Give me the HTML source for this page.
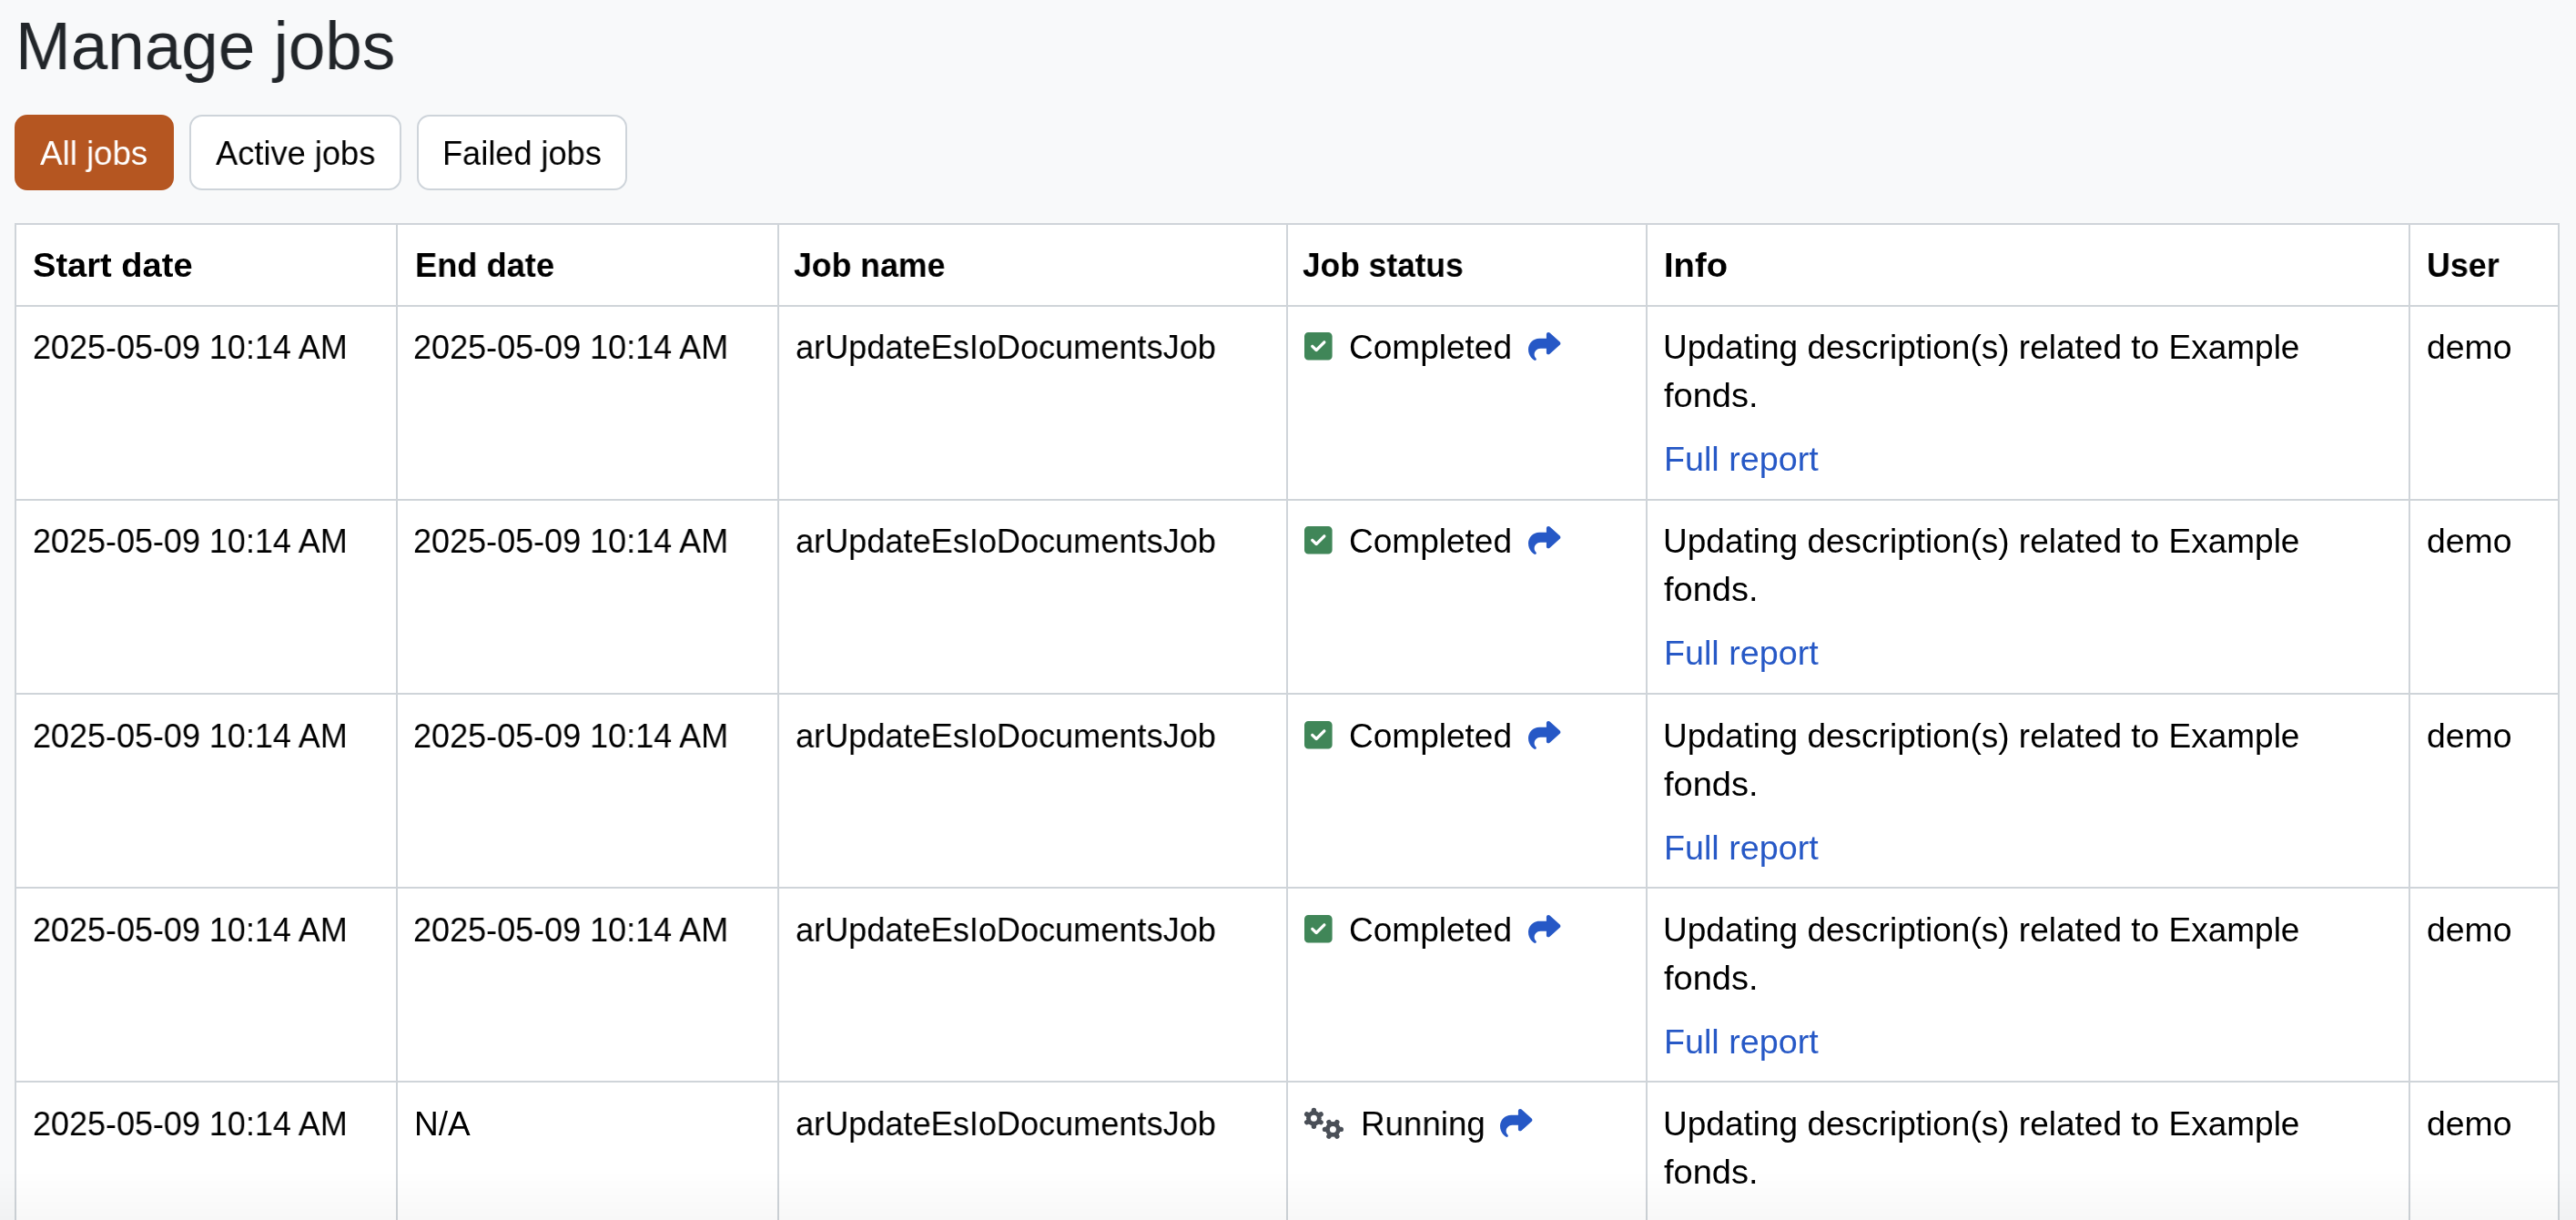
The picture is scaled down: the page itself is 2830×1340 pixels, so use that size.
<!DOCTYPE html>
<html><head><meta charset="utf-8"><title>Manage jobs</title>
<style>
html,body{margin:0;padding:0;}
body{width:2830px;height:1340px;overflow:hidden;background:#f8f9fa;position:relative;font-family:"Liberation Sans",sans-serif;}
.t{position:absolute;margin:0;padding:0;white-space:nowrap;line-height:0;transform-origin:0 0;will-change:transform;text-decoration:none;}
.btn{position:absolute;top:126px;height:83px;box-sizing:border-box;border:2px solid #ced4da;background:#fff;border-radius:14px;}
.btn.act{background:#b55621;border-color:#b55621;}
.tbl{position:absolute;background:#fff;}
.vl{position:absolute;width:2px;background:#cfd4d9;}
.hl{position:absolute;height:2px;background:#cfd4d9;}
.ic{position:absolute;overflow:visible;}
.fade{position:absolute;left:0;top:1285px;width:2830px;height:55px;background:linear-gradient(rgba(0,0,0,0),rgba(0,0,0,0.026));pointer-events:none;}
</style></head><body>
<h1 class="t" style="left:16.87px;top:51px;font-size:74px;font-weight:normal;color:#212529;transform:scaleX(0.9847);">Manage jobs</h1>
<div class="btn act" style="left:16px;width:174.5px"></div>
<a class="t" style="left:44.30px;top:169px;font-size:37px;font-weight:normal;color:#fff;transform:scaleX(0.9913);">All jobs</a>
<div class="btn" style="left:208px;width:232.5px"></div>
<a class="t" style="left:237.10px;top:169px;font-size:37px;font-weight:normal;color:#000;transform:scaleX(0.9797);">Active jobs</a>
<div class="btn" style="left:458px;width:230.5px"></div>
<a class="t" style="left:485.91px;top:169px;font-size:37px;font-weight:normal;color:#000;transform:scaleX(0.9769);">Failed jobs</a>
<div class="tbl" style="left:16px;top:245px;width:2796px;height:1105px"></div>
<div class="vl" style="left:16px;top:245px;height:1105px"></div>
<div class="vl" style="left:435px;top:245px;height:1105px"></div>
<div class="vl" style="left:854px;top:245px;height:1105px"></div>
<div class="vl" style="left:1413px;top:245px;height:1105px"></div>
<div class="vl" style="left:1808px;top:245px;height:1105px"></div>
<div class="vl" style="left:2646px;top:245px;height:1105px"></div>
<div class="vl" style="left:2810px;top:245px;height:1105px"></div>
<div class="hl" style="left:16px;top:245px;width:2796px"></div>
<div class="hl" style="left:16px;top:335px;width:2796px"></div>
<div class="hl" style="left:16px;top:548px;width:2796px"></div>
<div class="hl" style="left:16px;top:761px;width:2796px"></div>
<div class="hl" style="left:16px;top:974px;width:2796px"></div>
<div class="hl" style="left:16px;top:1187px;width:2796px"></div>
<b class="t" style="left:36.46px;top:291.5px;font-size:37px;font-weight:bold;color:#000;transform:scaleX(1.0288);">Start date</b>
<b class="t" style="left:456.34px;top:291.5px;font-size:37px;font-weight:bold;color:#000;transform:scaleX(0.9794);">End date</b>
<b class="t" style="left:872.17px;top:291.5px;font-size:37px;font-weight:bold;color:#000;transform:scaleX(0.9628);">Job name</b>
<b class="t" style="left:1430.87px;top:291.5px;font-size:37px;font-weight:bold;color:#000;transform:scaleX(0.9548);">Job status</b>
<b class="t" style="left:1828.02px;top:291.5px;font-size:37px;font-weight:bold;color:#000;transform:scaleX(1.0325);">Info</b>
<b class="t" style="left:2666.05px;top:291.5px;font-size:37px;font-weight:bold;color:#000;transform:scaleX(0.9679);">User</b>
<span class="t" style="left:35.80px;top:381.5px;font-size:37px;font-weight:normal;color:#000;transform:scaleX(0.9717);">2025-05-09 10:14 AM</span>
<span class="t" style="left:454.40px;top:381.5px;font-size:37px;font-weight:normal;color:#000;transform:scaleX(0.9728);">2025-05-09 10:14 AM</span>
<span class="t" style="left:874.26px;top:381.5px;font-size:37px;font-weight:normal;color:#000;transform:scaleX(0.9762);">arUpdateEsIoDocumentsJob</span>
<svg class="ic" style="left:1432.5px;top:365.3px" width="30.6" height="30.6" viewBox="0 32 448 448"><path fill="#408658" d="M64 32C28.7 32 0 60.7 0 96V416c0 35.3 28.7 64 64 64H384c35.3 0 64-28.7 64-64V96c0-35.3-28.7-64-64-64H64zM337 209L209 337c-9.4 9.4-24.6 9.4-33.9 0l-64-64c-9.4-9.4-9.4-24.6 0-33.9s24.6-9.4 33.9 0l47 47L303 175c9.4-9.4 24.6-9.4 33.9 0s9.4 24.6 0 33.9z"/></svg>
<span class="t" style="left:1482.05px;top:381.5px;font-size:37px;font-weight:normal;color:#000;transform:scaleX(1.0003);">Completed</span>
<svg class="ic" style="left:1678.9px;top:364.9px" width="35.4" height="31" viewBox="0 32 512 448"><path fill="#2658c6" d="M307 34.8c-11.5 5.1-19 16.6-19 29.2v64H176C78.8 128 0 206.8 0 304C0 417.3 81.5 467.9 100.2 478.1c2.5 1.4 5.3 1.9 8.1 1.9c10.9 0 19.7-8.9 19.7-19.7c0-7.5-4.3-14.4-9.8-19.5C108.8 431.9 96 414.4 96 384c0-53 43-96 96-96h96v64c0 12.6 7.4 24.1 19 29.2s25 3 34.4-5.4l160-144c6.7-6.1 10.6-14.7 10.6-23.8s-3.9-17.7-10.6-23.8l-160-144c-9.4-8.5-22.9-10.6-34.4-5.4z"/></svg>
<span class="t" style="left:1826.72px;top:381.5px;font-size:37px;font-weight:normal;color:#000;transform:scaleX(1.0003);">Updating description(s) related to Example</span>
<span class="t" style="left:1828.13px;top:434.5px;font-size:37px;font-weight:normal;color:#000;transform:scaleX(1.0273);">fonds.</span>
<a class="t" style="left:1828.28px;top:504.5px;font-size:37px;font-weight:normal;color:#2658c6;transform:scaleX(1.0186);">Full report</a>
<span class="t" style="left:2666.40px;top:381.5px;font-size:37px;font-weight:normal;color:#000;transform:scaleX(1.0107);">demo</span>
<span class="t" style="left:35.80px;top:594.5px;font-size:37px;font-weight:normal;color:#000;transform:scaleX(0.9717);">2025-05-09 10:14 AM</span>
<span class="t" style="left:454.40px;top:594.5px;font-size:37px;font-weight:normal;color:#000;transform:scaleX(0.9728);">2025-05-09 10:14 AM</span>
<span class="t" style="left:874.26px;top:594.5px;font-size:37px;font-weight:normal;color:#000;transform:scaleX(0.9762);">arUpdateEsIoDocumentsJob</span>
<svg class="ic" style="left:1432.5px;top:578.3px" width="30.6" height="30.6" viewBox="0 32 448 448"><path fill="#408658" d="M64 32C28.7 32 0 60.7 0 96V416c0 35.3 28.7 64 64 64H384c35.3 0 64-28.7 64-64V96c0-35.3-28.7-64-64-64H64zM337 209L209 337c-9.4 9.4-24.6 9.4-33.9 0l-64-64c-9.4-9.4-9.4-24.6 0-33.9s24.6-9.4 33.9 0l47 47L303 175c9.4-9.4 24.6-9.4 33.9 0s9.4 24.6 0 33.9z"/></svg>
<span class="t" style="left:1482.05px;top:594.5px;font-size:37px;font-weight:normal;color:#000;transform:scaleX(1.0003);">Completed</span>
<svg class="ic" style="left:1678.9px;top:577.9px" width="35.4" height="31" viewBox="0 32 512 448"><path fill="#2658c6" d="M307 34.8c-11.5 5.1-19 16.6-19 29.2v64H176C78.8 128 0 206.8 0 304C0 417.3 81.5 467.9 100.2 478.1c2.5 1.4 5.3 1.9 8.1 1.9c10.9 0 19.7-8.9 19.7-19.7c0-7.5-4.3-14.4-9.8-19.5C108.8 431.9 96 414.4 96 384c0-53 43-96 96-96h96v64c0 12.6 7.4 24.1 19 29.2s25 3 34.4-5.4l160-144c6.7-6.1 10.6-14.7 10.6-23.8s-3.9-17.7-10.6-23.8l-160-144c-9.4-8.5-22.9-10.6-34.4-5.4z"/></svg>
<span class="t" style="left:1826.72px;top:594.5px;font-size:37px;font-weight:normal;color:#000;transform:scaleX(1.0003);">Updating description(s) related to Example</span>
<span class="t" style="left:1828.13px;top:647.5px;font-size:37px;font-weight:normal;color:#000;transform:scaleX(1.0273);">fonds.</span>
<a class="t" style="left:1828.28px;top:717.5px;font-size:37px;font-weight:normal;color:#2658c6;transform:scaleX(1.0186);">Full report</a>
<span class="t" style="left:2666.40px;top:594.5px;font-size:37px;font-weight:normal;color:#000;transform:scaleX(1.0107);">demo</span>
<span class="t" style="left:35.80px;top:808.5px;font-size:37px;font-weight:normal;color:#000;transform:scaleX(0.9717);">2025-05-09 10:14 AM</span>
<span class="t" style="left:454.40px;top:808.5px;font-size:37px;font-weight:normal;color:#000;transform:scaleX(0.9728);">2025-05-09 10:14 AM</span>
<span class="t" style="left:874.26px;top:808.5px;font-size:37px;font-weight:normal;color:#000;transform:scaleX(0.9762);">arUpdateEsIoDocumentsJob</span>
<svg class="ic" style="left:1432.5px;top:792.3px" width="30.6" height="30.6" viewBox="0 32 448 448"><path fill="#408658" d="M64 32C28.7 32 0 60.7 0 96V416c0 35.3 28.7 64 64 64H384c35.3 0 64-28.7 64-64V96c0-35.3-28.7-64-64-64H64zM337 209L209 337c-9.4 9.4-24.6 9.4-33.9 0l-64-64c-9.4-9.4-9.4-24.6 0-33.9s24.6-9.4 33.9 0l47 47L303 175c9.4-9.4 24.6-9.4 33.9 0s9.4 24.6 0 33.9z"/></svg>
<span class="t" style="left:1482.05px;top:808.5px;font-size:37px;font-weight:normal;color:#000;transform:scaleX(1.0003);">Completed</span>
<svg class="ic" style="left:1678.9px;top:791.9px" width="35.4" height="31" viewBox="0 32 512 448"><path fill="#2658c6" d="M307 34.8c-11.5 5.1-19 16.6-19 29.2v64H176C78.8 128 0 206.8 0 304C0 417.3 81.5 467.9 100.2 478.1c2.5 1.4 5.3 1.9 8.1 1.9c10.9 0 19.7-8.9 19.7-19.7c0-7.5-4.3-14.4-9.8-19.5C108.8 431.9 96 414.4 96 384c0-53 43-96 96-96h96v64c0 12.6 7.4 24.1 19 29.2s25 3 34.4-5.4l160-144c6.7-6.1 10.6-14.7 10.6-23.8s-3.9-17.7-10.6-23.8l-160-144c-9.4-8.5-22.9-10.6-34.4-5.4z"/></svg>
<span class="t" style="left:1826.72px;top:808.5px;font-size:37px;font-weight:normal;color:#000;transform:scaleX(1.0003);">Updating description(s) related to Example</span>
<span class="t" style="left:1828.13px;top:861.5px;font-size:37px;font-weight:normal;color:#000;transform:scaleX(1.0273);">fonds.</span>
<a class="t" style="left:1828.28px;top:931.5px;font-size:37px;font-weight:normal;color:#2658c6;transform:scaleX(1.0186);">Full report</a>
<span class="t" style="left:2666.40px;top:808.5px;font-size:37px;font-weight:normal;color:#000;transform:scaleX(1.0107);">demo</span>
<span class="t" style="left:35.80px;top:1021.5px;font-size:37px;font-weight:normal;color:#000;transform:scaleX(0.9717);">2025-05-09 10:14 AM</span>
<span class="t" style="left:454.40px;top:1021.5px;font-size:37px;font-weight:normal;color:#000;transform:scaleX(0.9728);">2025-05-09 10:14 AM</span>
<span class="t" style="left:874.26px;top:1021.5px;font-size:37px;font-weight:normal;color:#000;transform:scaleX(0.9762);">arUpdateEsIoDocumentsJob</span>
<svg class="ic" style="left:1432.5px;top:1005.3px" width="30.6" height="30.6" viewBox="0 32 448 448"><path fill="#408658" d="M64 32C28.7 32 0 60.7 0 96V416c0 35.3 28.7 64 64 64H384c35.3 0 64-28.7 64-64V96c0-35.3-28.7-64-64-64H64zM337 209L209 337c-9.4 9.4-24.6 9.4-33.9 0l-64-64c-9.4-9.4-9.4-24.6 0-33.9s24.6-9.4 33.9 0l47 47L303 175c9.4-9.4 24.6-9.4 33.9 0s9.4 24.6 0 33.9z"/></svg>
<span class="t" style="left:1482.05px;top:1021.5px;font-size:37px;font-weight:normal;color:#000;transform:scaleX(1.0003);">Completed</span>
<svg class="ic" style="left:1678.9px;top:1004.9px" width="35.4" height="31" viewBox="0 32 512 448"><path fill="#2658c6" d="M307 34.8c-11.5 5.1-19 16.6-19 29.2v64H176C78.8 128 0 206.8 0 304C0 417.3 81.5 467.9 100.2 478.1c2.5 1.4 5.3 1.9 8.1 1.9c10.9 0 19.7-8.9 19.7-19.7c0-7.5-4.3-14.4-9.8-19.5C108.8 431.9 96 414.4 96 384c0-53 43-96 96-96h96v64c0 12.6 7.4 24.1 19 29.2s25 3 34.4-5.4l160-144c6.7-6.1 10.6-14.7 10.6-23.8s-3.9-17.7-10.6-23.8l-160-144c-9.4-8.5-22.9-10.6-34.4-5.4z"/></svg>
<span class="t" style="left:1826.72px;top:1021.5px;font-size:37px;font-weight:normal;color:#000;transform:scaleX(1.0003);">Updating description(s) related to Example</span>
<span class="t" style="left:1828.13px;top:1074.5px;font-size:37px;font-weight:normal;color:#000;transform:scaleX(1.0273);">fonds.</span>
<a class="t" style="left:1828.28px;top:1144.5px;font-size:37px;font-weight:normal;color:#2658c6;transform:scaleX(1.0186);">Full report</a>
<span class="t" style="left:2666.40px;top:1021.5px;font-size:37px;font-weight:normal;color:#000;transform:scaleX(1.0107);">demo</span>
<span class="t" style="left:35.80px;top:1234.5px;font-size:37px;font-weight:normal;color:#000;transform:scaleX(0.9717);">2025-05-09 10:14 AM</span>
<span class="t" style="left:455.04px;top:1234.5px;font-size:37px;font-weight:normal;color:#000;transform:scaleX(0.9992);">N/A</span>
<span class="t" style="left:874.26px;top:1234.5px;font-size:37px;font-weight:normal;color:#000;transform:scaleX(0.9762);">arUpdateEsIoDocumentsJob</span>
<svg class="ic" style="left:1432px;top:1216.2px" width="48" height="40" viewBox="0 0 48 40"><g fill="#4a4f57"><circle cx="11.4" cy="12.3" r="8.3"/><line x1="11.40" y1="3.40" x2="11.40" y2="21.20" stroke="#4a4f57" stroke-width="5.4" stroke-linecap="round"/><line x1="19.11" y1="7.85" x2="3.69" y2="16.75" stroke="#4a4f57" stroke-width="5.4" stroke-linecap="round"/><line x1="19.11" y1="16.75" x2="3.69" y2="7.85" stroke="#4a4f57" stroke-width="5.4" stroke-linecap="round"/><circle cx="11.4" cy="12.3" r="3.5" fill="#fff"/><circle cx="32.4" cy="24.4" r="8.3"/><line x1="36.85" y1="16.69" x2="27.95" y2="32.11" stroke="#4a4f57" stroke-width="5.4" stroke-linecap="round"/><line x1="41.30" y1="24.40" x2="23.50" y2="24.40" stroke="#4a4f57" stroke-width="5.4" stroke-linecap="round"/><line x1="36.85" y1="32.11" x2="27.95" y2="16.69" stroke="#4a4f57" stroke-width="5.4" stroke-linecap="round"/><circle cx="32.4" cy="24.4" r="3.5" fill="#fff"/></g></svg>
<span class="t" style="left:1495.26px;top:1234.5px;font-size:37px;font-weight:normal;color:#000;transform:scaleX(0.9920);">Running</span>
<svg class="ic" style="left:1648.3px;top:1217.8px" width="35.4" height="31" viewBox="0 32 512 448"><path fill="#2658c6" d="M307 34.8c-11.5 5.1-19 16.6-19 29.2v64H176C78.8 128 0 206.8 0 304C0 417.3 81.5 467.9 100.2 478.1c2.5 1.4 5.3 1.9 8.1 1.9c10.9 0 19.7-8.9 19.7-19.7c0-7.5-4.3-14.4-9.8-19.5C108.8 431.9 96 414.4 96 384c0-53 43-96 96-96h96v64c0 12.6 7.4 24.1 19 29.2s25 3 34.4-5.4l160-144c6.7-6.1 10.6-14.7 10.6-23.8s-3.9-17.7-10.6-23.8l-160-144c-9.4-8.5-22.9-10.6-34.4-5.4z"/></svg>
<span class="t" style="left:1826.72px;top:1234.5px;font-size:37px;font-weight:normal;color:#000;transform:scaleX(1.0003);">Updating description(s) related to Example</span>
<span class="t" style="left:1828.13px;top:1287.5px;font-size:37px;font-weight:normal;color:#000;transform:scaleX(1.0273);">fonds.</span>
<span class="t" style="left:2666.40px;top:1234.5px;font-size:37px;font-weight:normal;color:#000;transform:scaleX(1.0107);">demo</span>
<div class="fade"></div>
</body></html>
